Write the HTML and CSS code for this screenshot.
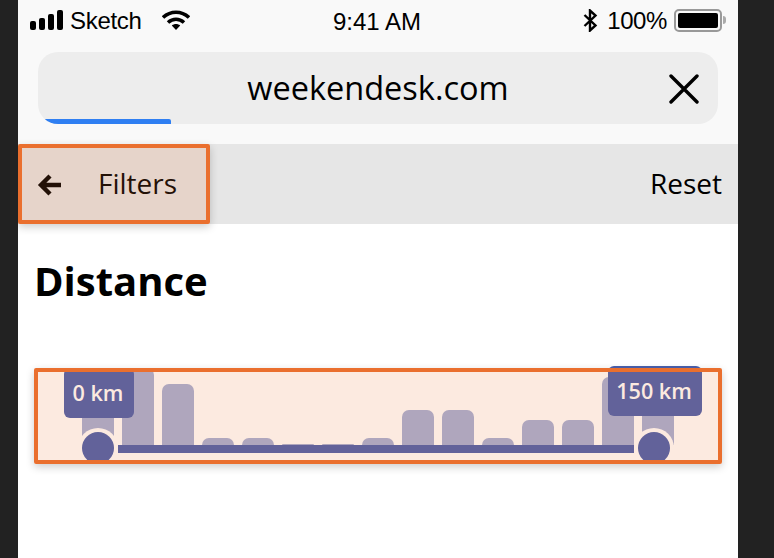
FILE: index.html
```html
<!DOCTYPE html>
<html lang="en">
<head>
  <meta charset="UTF-8" />
  <meta name="viewport" content="width=device-width, initial-scale=1.0"/>
  <title>Filters - Distance</title>
  <link rel="stylesheet" href="styles.css">
</head>
<body>
  <div class="phone">
    <div class="browser">
      <div class="status">
        <div class="status-left">
          <svg class="signal" width="34" height="20" viewBox="0 0 34 20">
            <rect x="0" y="11" width="6" height="9" rx="2"/>
            <rect x="9" y="8" width="6" height="12" rx="2"/>
            <rect x="18" y="4" width="6" height="16" rx="2"/>
            <rect x="27" y="0" width="6" height="20" rx="2"/>
          </svg>
          <span class="carrier">Sketch</span>
          <svg class="wifi" width="28" height="20" viewBox="0 0 28 20">
            <path d="M1 7.500C8.500.5 19.500.5 27 7.500" />
            <path d="M6 12.500c4.800-4.300 11.200-4.300 16 0" />
            <path class="wifi-dot" d="M14 20l-4.200-4.400c2.500-2 5.900-2 8.400 0z" />
          </svg>
        </div>
        <span class="time">9:41 AM</span>
        <div class="status-right">
          <svg class="bluetooth" width="15" height="23" viewBox="0 0 15 23">
            <path d="M1.500 6l11 10.500-5.500 5V1.500l5.500 5L1.500 17" />
          </svg>
          <span class="percent">100%</span>
          <div class="battery"><div class="battery-fill"></div></div>
          <div class="battery-tip"></div>
        </div>
      </div>
      <div class="url-bar">
        <span class="url">weekendesk.com</span>
        <svg class="close" width="30" height="30" viewBox="0 0 30 30">
          <path d="M2 2l26 26M28 2L2 28" />
        </svg>
        <div class="progress"></div>
      </div>
    </div>

    <div class="toolbar">
      <div class="back">
        <svg class="arrow" width="24" height="24" viewBox="0 0 24 24">
          <path d="M24 12H4M13 3l-9 9 9 9" />
        </svg>
        <span class="toolbar-text">Filters</span>
        <div class="hotspot"></div>
      </div>
      <span class="toolbar-text reset">Reset</span>
    </div>

    <h2 class="title">Distance</h2>

    <div class="range">
      <div class="bars">
        <div class="bar" style="height:60px"></div>
        <div class="bar" style="height:77px"></div>
        <div class="bar" style="height:61px"></div>
        <div class="bar" style="height:7px"></div>
        <div class="bar" style="height:7px"></div>
        <div class="bar" style="height:1px"></div>
        <div class="bar" style="height:1px"></div>
        <div class="bar" style="height:7px"></div>
        <div class="bar" style="height:35px"></div>
        <div class="bar" style="height:35px"></div>
        <div class="bar" style="height:7px"></div>
        <div class="bar" style="height:25px"></div>
        <div class="bar" style="height:25px"></div>
        <div class="bar" style="height:68px"></div>
        <div class="bar" style="height:60px"></div>
      </div>
      <div class="track"></div>
      <div class="thumb thumb-min"></div>
      <div class="thumb thumb-max"></div>
      <div class="bubble bubble-min">0 km</div>
      <div class="bubble bubble-max">150 km</div>
      <div class="hotspot"></div>
    </div>
  </div>
</body>
</html>
```

FILE: styles.css
```css
body {
  margin: 0;
  background: #222;
  font-family: "Open Sans", "Noto Sans", Arial, sans-serif;
  color: #000;
  height: 558px;
  overflow: hidden;
}

.phone {
  width: 720px;
  height: 558px;
  margin-left: 18px;
  background: #fff;
  overflow: hidden;
}

/* Browser chrome */
.browser {
  background: #f9f9f9;
  height: 144px;
  padding: 0 20px;
  box-sizing: border-box;
}

.status {
  height: 52px;
  display: flex;
  align-items: flex-start;
  justify-content: space-between;
  padding-top: 8px;
  box-sizing: border-box;
  font-family: "Liberation Sans", Arial, sans-serif;
  font-size: 24px;
  line-height: 27px;
  position: relative;
}

.status-left, .status-right {
  display: flex;
  align-items: center;
  height: 24px;
}

.signal {
  margin-left: -8px;
}

.carrier {
  margin-left: 6px;
  letter-spacing: -0.3px;
}

.wifi {
  margin-left: 20px;
}

.wifi path {
  fill: none;
  stroke: #000;
  stroke-width: 3.6;
}

.wifi .wifi-dot {
  fill: #000;
  stroke: none;
}

.time {
  position: absolute;
  left: 295px;
  top: 8px;
}

.status-right {
  margin-right: -8px;
}

.bluetooth {
  fill: none;
  stroke: #000;
  stroke-width: 2.4;
  margin-right: 1px;
}

.percent {
  margin-left: 8px;
  letter-spacing: -0.4px;
}

.battery {
  width: 48px;
  height: 23px;
  margin-left: 7px;
  border: 2px solid #999;
  border-radius: 5px;
  padding: 2px;
  box-sizing: border-box;
}

.battery-fill {
  height: 100%;
  background: #000;
  border-radius: 2px;
}

.battery-tip {
  width: 3px;
  height: 8px;
  margin-left: 1px;
  background: #aaa;
  border-radius: 0 3px 3px 0;
}

.url-bar {
  position: relative;
  height: 72px;
  background: #ededed;
  border-radius: 20px;
  display: flex;
  align-items: center;
  justify-content: center;
  overflow: hidden;
}

.url {
  font-size: 32.500px;
  line-height: 72px;
}

.close {
  position: absolute;
  right: 19px;
  top: 22px;
  fill: none;
  stroke: #000;
  stroke-width: 3.400;
  stroke-linecap: round;
}

.progress {
  position: absolute;
  left: 0;
  bottom: 0;
  width: 133px;
  height: 5px;
  background: #2f7ff2;
  border-radius: 0 2px 0 0;
}

/* Toolbar */
.toolbar {
  height: 80px;
  background: #e6e6e6;
  display: flex;
  align-items: center;
  justify-content: space-between;
  font-size: 28px;
  color: #000;
}

.toolbar-text {
  margin-bottom: 2px;
}

.back {
  position: relative;
  width: 192px;
  height: 80px;
  display: flex;
  align-items: center;
  box-sizing: border-box;
  padding-left: 20px;
}

.arrow {
  fill: none;
  stroke: #000;
  stroke-width: 4.400;
  margin: 2px 37px 0 -1px;
}

.reset {
  margin-right: 16px;
}

/* Highlight laid over a tappable area */
.hotspot {
  position: absolute;
  top: 0;
  left: 0;
  right: 0;
  bottom: 0;
  background: rgba(238, 113, 48, 0.15);
  border: 4px solid #ea6f2e;
  border-radius: 2px;
  box-shadow: 0 3px 8px rgba(0, 0, 0, 0.2);
}

.title {
  margin: 32px 0 0 16px;
  height: 112px;
  font-size: 40px;
  line-height: 50px;
  font-weight: 700;
}

/* Distance slider */
.range {
  position: relative;
  width: 688px;
  height: 96px;
  margin-left: 16px;
}

.bars {
  display: flex;
  align-items: flex-end;
  gap: 8px;
  height: 77px;
  padding-left: 48px;
}

.bar {
  width: 32px;
  background: #a5b0d6;
  border-radius: 7px 7px 0 0;
}

.track {
  width: 516px;
  height: 8px;
  margin-left: 84px;
  background: #4a60ad;
}

.thumb {
  position: absolute;
  top: 64px;
  width: 32px;
  height: 32px;
  background: #4a60ad;
  border-radius: 50%;
  box-shadow: 0 0 0 4px #fff;
}

.thumb-min {
  left: 48px;
}

.thumb-max {
  left: 604px;
}

.bubble {
  position: absolute;
  height: 50px;
  padding-right: 2px;
  box-sizing: border-box;
  background: #4a60ad;
  border-radius: 6px;
  color: #fff;
  font-size: 21.600px;
  font-weight: 600;
  line-height: 50px;
  text-align: center;
}

.bubble-min {
  left: 30px;
  top: 0;
  width: 70px;
}

.bubble-max {
  left: 574px;
  top: -2px;
  width: 94px;
}
```
